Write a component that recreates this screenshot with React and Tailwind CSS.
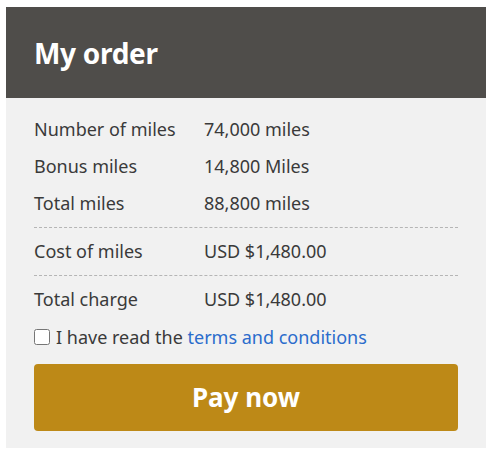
import React from "react";

function Row({ label, value }) {
  return (
    <div className="flex items-center h-[37px]">
      <div className="w-[170px]">{label}</div>
      <div>{value}</div>
    </div>
  );
}

export default function App() {
  return (
    <div className="w-[492px] h-[453px] bg-white pt-[7px] pl-[6px]" style={{ fontFamily: '"Noto Sans", Lato, sans-serif' }}>
      <div className="w-[480px] h-[441px] bg-[#f1f1f1] flex flex-col">
        <div className="h-[91px] bg-[#4f4d4a] flex items-center px-[28px]">
          <h1 className="text-white text-[28px] font-bold tracking-[-0.3px]">My order</h1>
        </div>
        <div className="px-[28px] pt-[13px] text-[18px] text-[#3a3a3a]">
          <Row label="Number of miles" value="74,000 miles" />
          <Row label="Bonus miles" value="14,800 Miles" />
          <Row label="Total miles" value="88,800 miles" />
          <div className="border-t border-dashed border-[#b5b5b5] mt-[5px]" />
          <div className="flex items-center h-[47px]">
            <div className="w-[170px]">Cost of miles</div>
            <div>USD $1,480.00</div>
          </div>
          <div className="border-t border-dashed border-[#b5b5b5]" />
          <div className="flex items-center h-[47px]">
            <div className="w-[170px]">Total charge</div>
            <div>USD $1,480.00</div>
          </div>
          <label className="flex items-center h-[28px]">
            <input type="checkbox" className="w-[16px] h-[16px] mr-[6px] m-0" />
            <span>I have read the <a className="text-[#2a6ccc]">terms and conditions</a></span>
          </label>
          <button className="mt-[13px] w-full h-[67px] rounded-[4px] bg-[#bd8917] text-white text-[26px] font-bold">Pay now</button>
        </div>
      </div>
    </div>
  );
}
